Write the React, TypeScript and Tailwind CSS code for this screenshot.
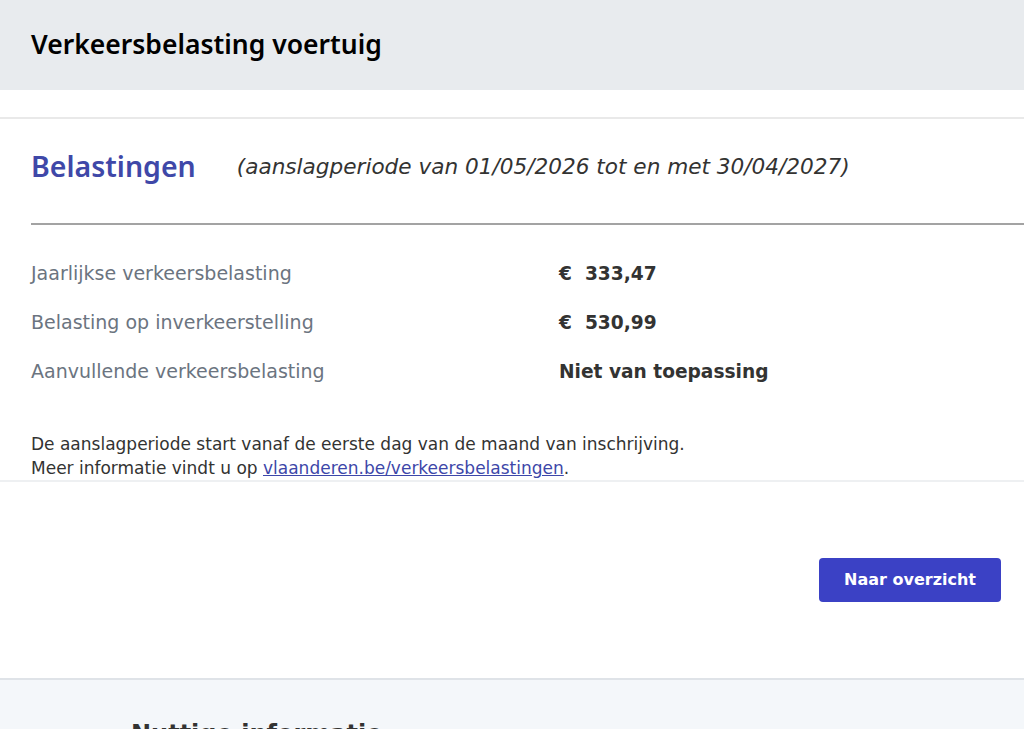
const rows = [
  { label: 'Jaarlijkse verkeersbelasting', value: '€  333,47' },
  { label: 'Belasting op inverkeerstelling', value: '€  530,99' },
  { label: 'Aanvullende verkeersbelasting', value: 'Niet van toepassing' },
];

const heading = { fontFamily: '"Noto Sans", "DejaVu Sans", sans-serif' };

export default function App() {
  return (
    <div className="min-h-screen bg-white text-[#333332]" style={{ fontFamily: '"DejaVu Sans", "Noto Sans", sans-serif' }}>
      {/* page header */}
      <div className="h-[90px] bg-[#e8ebee] flex items-center px-[31px]">
        <h1 className="text-[26.5px] font-semibold text-black" style={heading}>Verkeersbelasting voertuig</h1>
      </div>

      <div className="h-[27px]" />

      {/* belastingen block */}
      <div className="border-t-2 border-[#e9e9e9] border-b-2 border-b-[#eef0f2]">
        <div className="pl-[31px]">
          <div className="h-[106px] flex items-center gap-[41px] border-b-2 border-[#a3a3a3] pb-[10px]">
            <h2 className="text-[28.5px] font-semibold text-[#3f48a8]" style={heading}>Belastingen</h2>
            <p className="text-[21.6px] italic text-[#333332] pt-[2px]">(aanslagperiode van 01/05/2026 tot en met 30/04/2027)</p>
          </div>

          <div className="mt-[24px]">
            {rows.map((r) => (
              <div key={r.label} className="h-[49px] flex items-center text-[19px]">
                <div className="w-[528px] text-[#6b7480]">{r.label}</div>
                <div className="font-bold whitespace-pre text-[18.6px]">{r.value}</div>
              </div>
            ))}
          </div>

          <div className="mt-[36px] text-[17px] leading-[24px] text-[#333332]">
            <p>De aanslagperiode start vanaf de eerste dag van de maand van inschrijving.</p>
            <p>
              Meer informatie vindt u op{' '}
              <a href="#" className="text-[#3d47a9] underline">vlaanderen.be/verkeersbelastingen</a>.
            </p>
          </div>
        </div>
      </div>

      {/* actions */}
      <div className="flex justify-end pr-[23px] pt-[76px] pb-[76px]">
        <button className="h-[44px] w-[182px] rounded-[4px] bg-[#3b41c5] text-white text-[16px] font-bold">
          Naar overzicht
        </button>
      </div>

      {/* footer info */}
      <div className="border-t-2 border-[#dfe3e8] bg-[#f4f7fa] pl-[131px] pt-[36px] pb-[40px]">
        <h3 className="text-[24px] font-bold text-[#333332]">Nuttige informatie</h3>
      </div>
    </div>
  );
}
